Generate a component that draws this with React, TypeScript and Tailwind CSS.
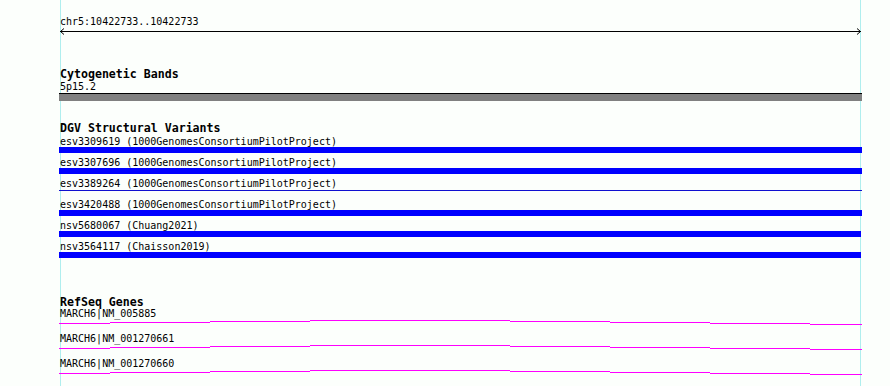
const variants = [
  { label: 'esv3309619 (1000GenomesConsortiumPilotProject)', kind: 'bar', w: 'w-[803px]' },
  { label: 'esv3307696 (1000GenomesConsortiumPilotProject)', kind: 'bar', w: 'w-[803px]' },
  { label: 'esv3389264 (1000GenomesConsortiumPilotProject)', kind: 'line', w: 'w-[803px]' },
  { label: 'esv3420488 (1000GenomesConsortiumPilotProject)', kind: 'bar', w: 'w-[803px]' },
  { label: 'nsv5680067 (Chuang2021)', kind: 'bar', w: 'w-[802px]' },
  { label: 'nsv3564117 (Chaisson2019)', kind: 'bar', w: 'w-[802px]' },
];

const genes = ['MARCH6|NM_005885', 'MARCH6|NM_001270661', 'MARCH6|NM_001270660'];

// gene line is drawn in small steps, like the rasterised export
const steps = [
  [0, 51, 4],
  [51, 151, 3],
  [151, 251, 2],
  [251, 351, 1],
  [351, 451, 1],
  [451, 551, 2],
  [551, 651, 3],
  [651, 751, 4],
  [751, 803, 5],
];

function TrackTitle({ children, className }: { children: React.ReactNode; className: string }) {
  return <div className={`-ml-px h-[12px] leading-[14px] text-[11.6px] font-bold whitespace-nowrap ${className}`}>{children}</div>;
}

function Label({ children }: { children: React.ReactNode }) {
  return <div className="-ml-px h-[12px] leading-[14px] text-[10px] whitespace-nowrap">{children}</div>;
}

export default function App() {
  return (
    <div className="w-[890px] h-[386px] overflow-hidden bg-[#fcfffc] text-black font-['DejaVu_Sans_Mono',monospace]">
      <div className="ml-[60px] w-[801px] h-full border-x border-[#afeeee] flex flex-col">
        {/* location ruler */}
        <div className="mt-[15px]">
          <Label>chr5:10422733..10422733</Label>
        </div>
        <svg className="-ml-px mt-[1px] shrink-0" width="801" height="7" viewBox="0 0 801 7">
          <rect x="0" y="3" width="801" height="1" fill="#000" />
          <polyline points="4,0.5 0.5,3.5 4,6.5" fill="none" stroke="#000" strokeWidth="1" />
          <polyline points="797,0.5 800.5,3.5 797,6.5" fill="none" stroke="#000" strokeWidth="1" />
        </svg>

        {/* cytogenetic bands */}
        <TrackTitle className="mt-[32px]">Cytogenetic Bands</TrackTitle>
        <div className="mt-[1px]">
          <Label>5p15.2</Label>
        </div>
        <div className="-ml-[2px] w-[803px] mt-[1px] h-[8px] border-t border-black bg-[#808080] shrink-0" />

        {/* DGV */}
        <TrackTitle className="mt-[20px]">DGV Structural Variants</TrackTitle>
        <div className="mt-[2px] flex flex-col gap-[3px]">
          {variants.map((v) => (
            <div key={v.label} className="flex flex-col">
              <Label>{v.label}</Label>
              {v.kind === 'bar' ? (
                <div className={`-ml-[2px] ${v.w} h-[6px] bg-[#0000ff]`} />
              ) : (
                <div className={`-ml-[2px] ${v.w} h-[6px] pt-px`}>
                  <div className="h-px bg-[#1010d0]" />
                </div>
              )}
            </div>
          ))}
        </div>

        {/* RefSeq */}
        <TrackTitle className="mt-[37px]">RefSeq Genes</TrackTitle>
        <div className="flex flex-col">
          {genes.map((g) => (
            <div key={g} className="flex flex-col">
              <Label>{g}</Label>
              <svg className="-ml-[2px] shrink-0" width="803" height="13" viewBox="0 0 803 13" shapeRendering="crispEdges">
                {steps.map(([a, b, y]) => (
                  <rect key={a} x={a} y={y} width={b - a} height="1" fill="#ff00ff" />
                ))}
              </svg>
            </div>
          ))}
        </div>
      </div>
    </div>
  );
}
